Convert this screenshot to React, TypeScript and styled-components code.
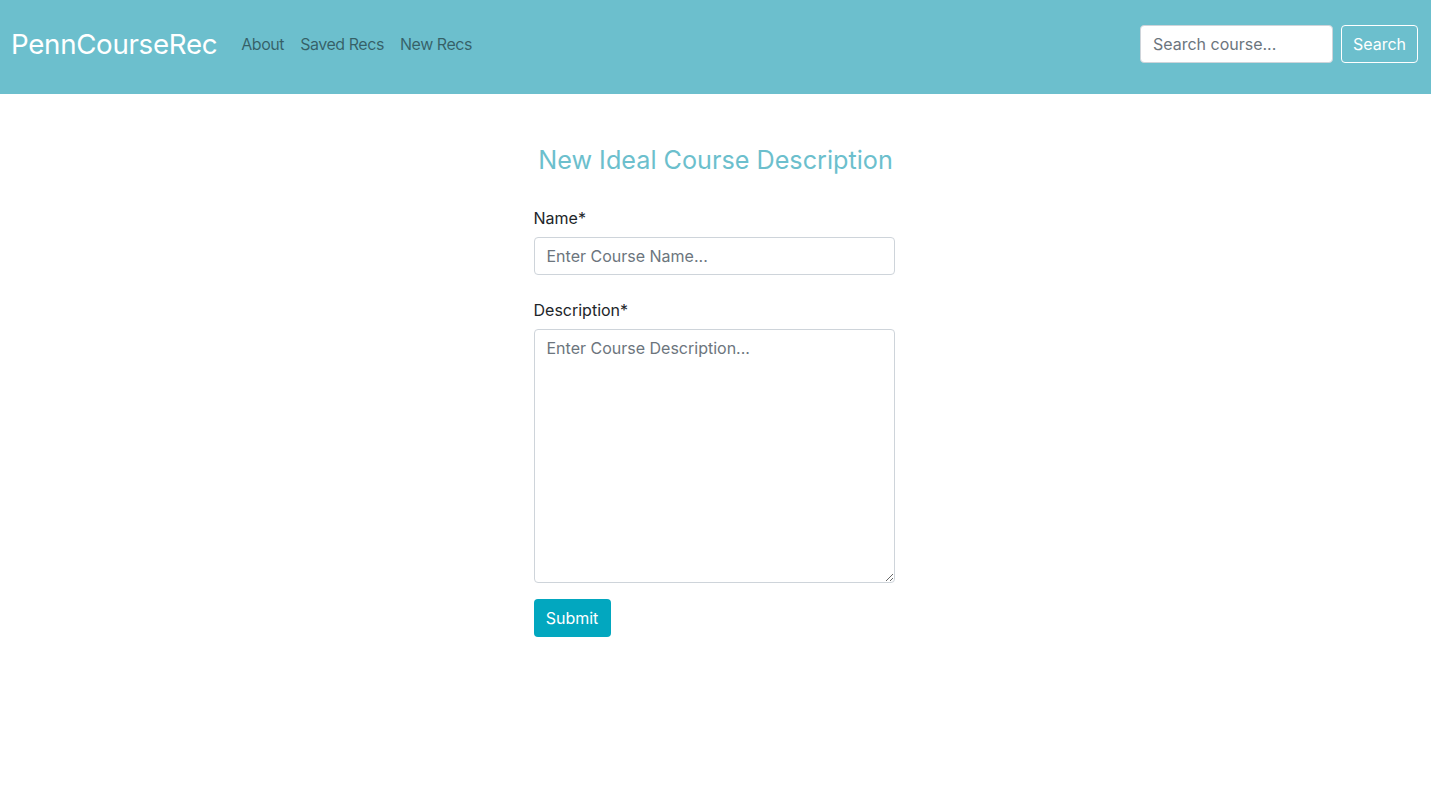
import styled, { createGlobalStyle } from "styled-components";

const GlobalStyle = createGlobalStyle`
  body {
    margin: 0;
    font-family: Inter, "Noto Sans", "Liberation Sans", sans-serif;
    color: #212529;
    background-color: #fff;
  }
  * {
    box-sizing: border-box;
  }
`;

const Navbar = styled.nav`
  height: 94px;
  padding: 0 13px 6px 11px;

  display: flex;
  flex-direction: row;
  align-items: center;
  justify-content: space-between;

  background-color: #6cbfcd;
`;

const NavLeft = styled.div`
  display: flex;
  flex-direction: row;
  align-items: center;
`;

const Brand = styled.a`
  margin-right: 16px;
  font-size: 27.7px;
  letter-spacing: -0.3px;
  color: #fff;
  text-decoration: none;
`;

const NavLink = styled.a`
  padding: 0 8px;
  font-size: 16px;
  letter-spacing: -0.45px;
  color: rgba(0, 0, 0, 0.5);
  text-decoration: none;
  cursor: pointer;
`;

const SearchForm = styled.form`
  display: flex;
  flex-direction: row;
  align-items: center;
  gap: 8px;
`;

const SearchInput = styled.input`
  width: 193px;
  height: 38px;
  padding: 6px 12px;

  font-family: inherit;
  font-size: 16px;
  color: #495057;

  border: 1px solid #ced4da;
  border-radius: 4px;
  background-color: #fff;
  outline: none;

  &::placeholder {
    color: #6c757d;
  }
`;

const OutlineButton = styled.button`
  height: 38px;
  padding: 6px 11px;

  font-family: inherit;
  font-size: 16px;
  color: #fff;

  border: 1px solid #fff;
  border-radius: 4px;
  background-color: transparent;
  cursor: pointer;
`;

const Main = styled.main`
  display: flex;
  flex-direction: column;
  align-items: center;
  padding-top: 51px;
`;

const Title = styled.h3`
  margin: 0 0 31px;
  font-size: 25.2px;
  font-weight: 400;
  color: #6cbfcd;
`;

const Form = styled.form`
  width: 361px;
  margin-left: -3px;
  display: flex;
  flex-direction: column;
`;

const Group = styled.div<{ $gap: number }>`
  margin-bottom: ${(p) => p.$gap}px;
  display: flex;
  flex-direction: column;
`;

const Label = styled.label`
  margin-bottom: 7px;
  font-size: 16px;
  line-height: 24px;
  color: #212529;
`;

const TextInput = styled.input`
  width: 100%;
  height: 38px;
  padding: 6px 12px;

  font-family: inherit;
  font-size: 16px;
  color: #495057;

  border: 1px solid #ced4da;
  border-radius: 4px;
  outline: none;

  &::placeholder {
    color: #6c757d;
  }
`;

const TextArea = styled.textarea`
  width: 100%;
  height: 254px;
  padding: 6px 12px;
  resize: vertical;

  font-family: inherit;
  font-size: 16px;
  line-height: 24px;
  color: #495057;

  border: 1px solid #ced4da;
  border-radius: 4px;
  outline: none;

  &::placeholder {
    color: #6c757d;
  }
`;

const SubmitButton = styled.button`
  width: 77px;
  height: 38px;

  font-family: inherit;
  font-size: 16px;
  color: #fff;

  border: none;
  border-radius: 4px;
  background-color: #02a7bf;
  cursor: pointer;
`;

const App = () => {
  return (
    <>
      <GlobalStyle />
      <Navbar>
        <NavLeft>
          <Brand>PennCourseRec</Brand>
          <NavLink>About</NavLink>
          <NavLink>Saved Recs</NavLink>
          <NavLink>New Recs</NavLink>
        </NavLeft>
        <SearchForm onSubmit={(e) => e.preventDefault()}>
          <SearchInput placeholder="Search course..." />
          <OutlineButton type="submit">Search</OutlineButton>
        </SearchForm>
      </Navbar>
      <Main>
        <Title>New Ideal Course Description</Title>
        <Form onSubmit={(e) => e.preventDefault()}>
          <Group $gap={23}>
            <Label>Name*</Label>
            <TextInput placeholder="Enter Course Name..." />
          </Group>
          <Group $gap={16}>
            <Label>Description*</Label>
            <TextArea placeholder="Enter Course Description..." />
          </Group>
          <SubmitButton type="submit">Submit</SubmitButton>
        </Form>
      </Main>
    </>
  );
};

export default App;
